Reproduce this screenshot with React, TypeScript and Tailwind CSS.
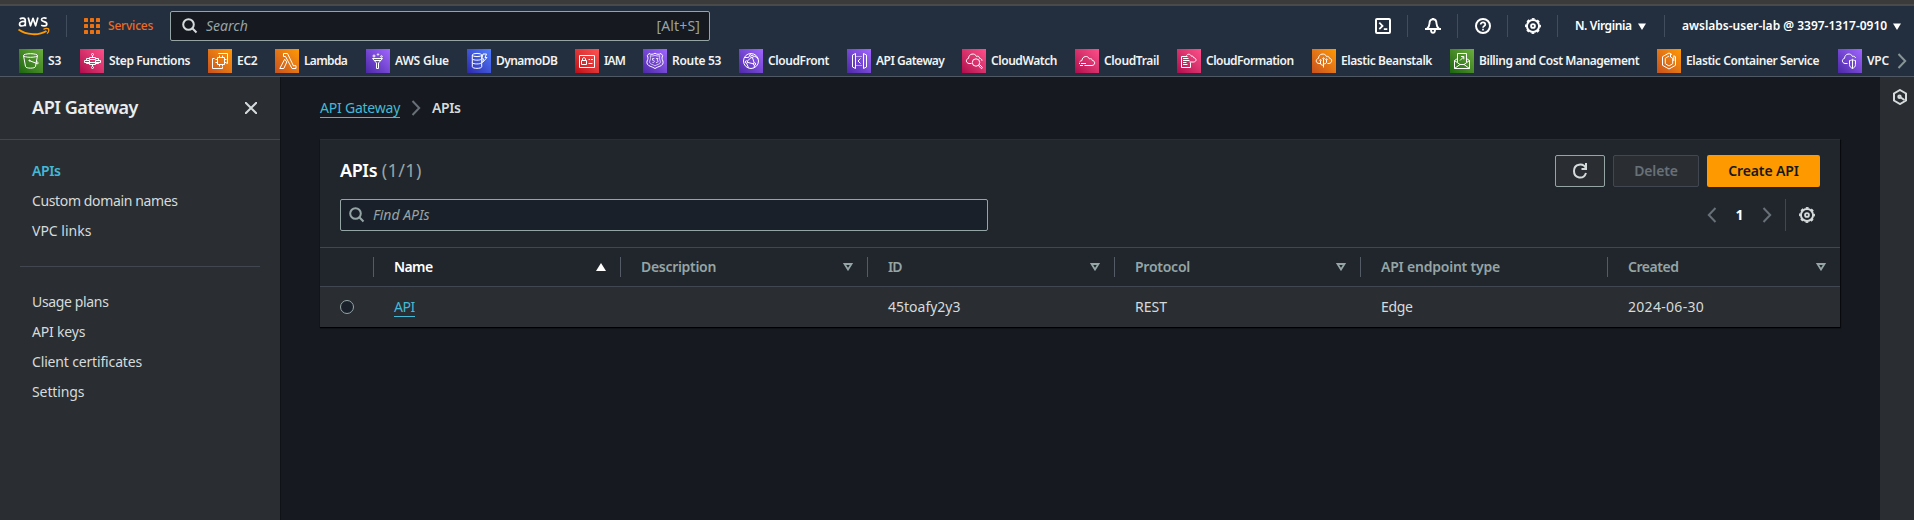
import type { ReactNode } from "react";

type Service = { label: string; slot: string; tracking: string; tile: string; icon: ReactNode };

const GREEN = "from-[#1b660f] to-[#6cae3e]";
const PINK = "from-[#b0084d] to-[#ff4f8b]";
const ORANGE = "from-[#c8511b] to-[#ff9900]";
const PURPLE = "from-[#4d27a8] to-[#a166ff]";
const BLUE = "from-[#2e27ad] to-[#527fff]";
const RED = "from-[#bd0816] to-[#ff5252]";

const services: Service[] = [
  {
    label: "S3", slot: "w-[61px]", tracking: "", tile: GREEN,
    icon: (
      <>
        <ellipse cx="11.5" cy="6.5" rx="7" ry="1.8" />
        <path d="M4.5 6.5 6.5 17.5c.6 2.2 9.4 2.2 10 0l2-11M10.5 11.7l8 3c1.4-.2 1-1.4-1-2.200" />
        <circle cx="10.5" cy="11.5" r=".6" />
      </>
    ),
  },
  {
    label: "Step Functions", slot: "w-[128px]", tracking: "tracking-[-0.37px]", tile: PINK,
    icon: (
      <>
        <circle cx="12.5" cy="5.5" r="1" />
        <circle cx="12.5" cy="18.5" r="1" />
        <path d="M9.5 8.5h6v2h-6zM4.5 11.5h5v2h-5zM15.5 11.5h5v2h-5zM9.5 15.5h6v-2h-6zM12.5 6.5v2M12.5 15.5v2M6.5 11.5v-2h3M18.5 11.5v-2h-3M6.5 13.5v1h3M18.5 13.5v1h-3" />
      </>
    ),
  },
  {
    label: "EC2", slot: "w-[67px]", tracking: "tracking-[-0.25px]", tile: ORANGE,
    icon: (
      <>
        <path d="M9.5 8.5h7v7h-7zM11.5 8.5v-2M14.5 8.5v-2M11.5 17.5v-2M14.5 17.5v-2M9.5 10.5h-2M9.5 13.5h-2M18.5 10.5h-2M18.5 13.5h-2" />
        <path d="M10.5 5V4.5h9v10h-1M6.5 9.5h-2v10h10v-1.5" />
      </>
    ),
  },
  {
    label: "Lambda", slot: "w-[91px]", tracking: "tracking-[-0.68px]", tile: ORANGE,
    icon: <path d="M9.7 10.2 4.8 19.5h4l3-6.5zM8.5 4.5h4l6 12.5 1.5-.5 1 .2v2.8h-4L10.5 7.5h-2z" />,
  },
  {
    label: "AWS Glue", slot: "w-[101px]", tracking: "tracking-[-0.2px]", tile: PURPLE,
    icon: (
      <>
        <path d="M6.5 9.5 10.5 14v5.5h2V14l4-4.5zM8 11.5h7" />
        <circle cx="8" cy="7" r="1" />
        <circle cx="12" cy="5.5" r=".7" />
        <circle cx="15.5" cy="7.5" r=".8" />
      </>
    ),
  },
  {
    label: "DynamoDB", slot: "w-[108px]", tracking: "tracking-[-0.55px]", tile: BLUE,
    icon: (
      <>
        <ellipse cx="10" cy="6" rx="4.7" ry="1.6" />
        <path d="M5.3 6v11.7c0 2.2 9.4 2.2 9.400 0V6M5.300 9.800c.6 1.800 8.400 1.800 9 .2M5.300 13.600c.6 1.800 8.400 1.800 9.200 0M16 5h3.500l-1.500 3.500h2l-4.500 5 1-3.700h-1.800z" />
      </>
    ),
  },
  {
    label: "IAM", slot: "w-[68px]", tracking: "tracking-[-0.9px]", tile: RED,
    icon: (
      <path d="M4.5 6.5h15v12h-15zM6.5 11.5h5v4h-5zM7.5 11.5v-2c0-1 3-1 3 0v2M13.5 10.5h1.5M16 10.5h2M13.5 14.5h4" />
    ),
  },
  {
    label: "Route 53", slot: "w-[96px]", tracking: "tracking-[-0.3px]", tile: PURPLE,
    icon: (
      <>
        <path d="M6 4.5c2 1.2 4 1 6-.3 2 1.3 4 1.5 6 .3l1.7 2.2c-1 2-.8 3.300.2 5.300.8 2.500-.6 4.300-3 5.200-2 .8-3.500 1.300-4.900 2.300-1.400-1-2.900-1.500-4.900-2.300-2.400-.9-3.800-2.700-3-5.200 1-2 1.200-3.300.2-5.300z" />
        <path d="M7.2 6.700c1.700.5 3.200.4 4.800-.5 1.600.9 3.100 1 4.800.5-.5 2.300-.3 3.600.5 5.600.4 1.500-.5 2.400-2 3-1.200.5-2.300.9-3.300 1.600-1-.7-2.100-1.100-3.300-1.600-1.500-.6-2.400-1.500-2-3 .8-2 1-3.300.5-5.600z" strokeWidth=".7" />
        <path d="M11.3 9.500H9.500v1.700c2.500-.2 2.500 2.500 0 2.300M13 9.500h2l-1 1.600c1.700.3 1.400 2.600-1 2.400" strokeWidth=".8" />
      </>
    ),
  },
  {
    label: "CloudFront", slot: "w-[108px]", tracking: "tracking-[-0.4px]", tile: PURPLE,
    icon: (
      <>
        <circle cx="12" cy="12" r="7.5" />
        <circle cx="13" cy="7.5" r="1.3" />
        <circle cx="7.5" cy="13" r="1.2" />
        <circle cx="15.5" cy="15" r="1.2" />
        <path d="m12.2 8.5-4 3.7M13.5 8.7l1.7 5.2M9 13.5l5.5 1.3M5.5 8.5h4l2-3.500M14.5 7c2 .3 3.500 1.500 4.500 3M15.5 16.200l-.5 2.800M7.500 14.200l2 4.500" />
      </>
    ),
  },
  {
    label: "API Gateway", slot: "w-[115px]", tracking: "tracking-[-0.5px]", tile: PURPLE,
    icon: (
      <>
        <path d="M8.5 4.5v15l-3-1.5V6zM16.5 4.5v15l3-1.5V6zM13.5 9.500 11 12l2.500 2.500" />
        <path d="M9.5 7.5h6M9.5 16.5h6" strokeDasharray="1 1" />
      </>
    ),
  },
  {
    label: "CloudWatch", slot: "w-[113px]", tracking: "tracking-[-0.44px]", tile: PINK,
    icon: (
      <>
        <path d="M9.5 14.5H7c-3.300-.4-3.500-4.500-.4-5.200C6.500 4.500 13 3.500 14.500 7.500c1.500-.8 3 0 3 1.800 1.500.2 2.500 1 2.500 2.500" />
        <circle cx="14" cy="13.5" r="3.7" />
        <path d="m16.5 16.5 1.200-.8 2.500 2.500c.5 1-.5 1.700-1.200 1.200z" />
      </>
    ),
  },
  {
    label: "CloudTrail", slot: "w-[102px]", tracking: "tracking-[-0.36px]", tile: PINK,
    icon: (
      <path d="M9.5 16.5h7.500c3.500-.2 3.500-4.800.3-5-.2-1.700-1.500-2.200-2.800-1.500-1.500-4-7.500-3-7.500 1.500-1 .2-2 .7-2.500 1.500M4 14.500h1M6 14.500h5M5 16.500h3" />
    ),
  },
  {
    label: "CloudFormation", slot: "w-[135px]", tracking: "tracking-[-0.5px]", tile: PINK,
    icon: (
      <path d="M13.5 13.5v5h-9v-11h6M6 9.500h5.500M6 11.500h6.500M6 13.500h3.500M6 15.500h4.500M9.500 6.500c1-1.700 4-1.800 4.800.7 1.300-.4 2.200.2 2.400 1.500 3 .3 3.300 4-.2 4.300h-4" />
    ),
  },
  {
    label: "Elastic Beanstalk", slot: "w-[138px]", tracking: "tracking-[-0.43px]", tile: ORANGE,
    icon: (
      <>
        <path d="M9 14.5H7c-3.500-.2-3.700-4.500-.5-5.200C6.500 4.500 13 3.500 14.500 7.500c1.500-.6 2.700.2 2.800 1.700 3.200.5 3.200 4.800-.3 5.300h-1.500M11.500 10v8.500M8.500 12v2c0 1.500.9 2.300 3 2.300M14.500 11v2c0 1.200-.9 1.900-3 1.900" />
        <circle cx="8.500" cy="11.3" r=".7" />
        <circle cx="14.5" cy="10.5" r=".7" />
        <circle cx="11.5" cy="9.5" r=".7" />
      </>
    ),
  },
  {
    label: "Billing and Cost Management", slot: "w-[207px]", tracking: "tracking-[-0.46px]", tile: GREEN,
    icon: (
      <path d="M4.5 11.5v8h15v-8l-5.500 4h-4zM4.500 19.500l5.500-4M19.500 19.500l-5.500-4M7.500 13V4.500h9V13M4.500 11.500l3-2M19.500 11.500l-3-2M10 11.500l3.500-3.500M11 7.500h2.800v2.800" />
    ),
  },
  {
    label: "Elastic Container Service", slot: "w-[181px]", tracking: "tracking-[-0.41px]", tile: ORANGE,
    icon: (
      <>
        <path d="M15 5.500 12 4 5.500 7.700v8.600L12 20l6.500-3.700V7.700l-1.700-1v5.300" />
        <path d="M12 7 8.300 9.300v5.400L12 17l3.700-2.300V9.300L13.500 8V4.500" />
      </>
    ),
  },
  {
    label: "VPC", slot: "w-[51px]", tracking: "tracking-[-0.2px]", tile: PURPLE,
    icon: (
      <path d="M9.500 14.500H7c-3.300-.4-3.500-4.500-.4-5.200C6.500 4.500 13 3.500 14.500 7.500c1.500-.6 2.700 0 3 1.500M11.500 11.500c1.200 0 2.200-.3 3-1.200.8.900 1.800 1.200 3 1.200v4c0 2-1 3-3 4-2-1-3-2-3-4zM14.500 10.500v9" />
    ),
  },
];

function Gear({ className }: { className: string }) {
  return (
    <svg viewBox="0 0 16 16" className={className} fill="none" stroke="currentColor">
      <circle cx="8" cy="8" r="6.100" strokeWidth="2" />
      <circle cx="8" cy="8" r="7.200" strokeWidth="1.500" strokeDasharray="2.827 2.827" strokeDashoffset="1.413" />
      <circle cx="8" cy="8" r="1.900" strokeWidth="1.900" />
    </svg>
  );
}

function Search({ className }: { className: string }) {
  return (
    <svg viewBox="0 0 16 16" className={className} fill="none" stroke="currentColor" strokeWidth="2">
      <circle cx="6.500" cy="6.500" r="5.300" />
      <path d="m10.300 10.300 4.200 4.200" />
    </svg>
  );
}

function Chevron({ className, flip = false }: { className: string; flip?: boolean }) {
  return (
    <svg viewBox="0 0 10 16" className={className} fill="none" stroke="currentColor" strokeWidth="2">
      <path d={flip ? "M8.500 1 1.800 8l6.700 7" : "M1.500 1l6.700 7-6.700 7"} />
    </svg>
  );
}

function Caret() {
  return (
    <svg viewBox="0 0 8 7" className="h-[7px] w-2 shrink-0" fill="currentColor">
      <path d="M0 .5h8L4 7z" />
    </svg>
  );
}

function Rule({ className = "" }: { className?: string }) {
  return <div className={`h-[22px] w-px shrink-0 bg-[#414d5c] ${className}`} />;
}

function TopBar() {
  return (
    <div className="flex h-10 items-center text-xs font-semibold text-white">
      <svg viewBox="0 0 32 22" className="ml-[18px] h-[22px] w-8 shrink-0" fill="none">
        <g stroke="#fff" strokeWidth="1.700" strokeLinejoin="round">
          <path d="M1.800 4c1.600-1.200 5.500-1.500 5.500 1.500v5.700M7.300 6.800C4.500 6 1.500 6.600 1.500 9c0 2.700 4.200 2.600 5.800.1" />
          <path d="m10.200 2.500 2.300 8.300L15 3.300l2.600 7.500 2.300-8.300" />
          <path d="M28.600 3.600c-1.800-1-5.100-.9-5.100 1.100 0 2.500 5.300 1.400 5.300 4.200 0 2.400-3.800 2.500-5.600 1.200" />
        </g>
        <path d="M.5 14.500c8 5.700 20 6.300 28 1.500" stroke="#f90" strokeWidth="1.800" />
        <path d="M25.500 14.300c1.800-.9 4-1 5-.4.500 1-.1 3.300-1.500 4.700" stroke="#f90" strokeWidth="1.300" />
      </svg>
      <Rule className="ml-4" />
      <svg viewBox="0 0 16 16" className="ml-[17px] size-4 shrink-0" fill="#ec7211">
        {[0, 6, 12].map((y) => [0, 6, 12].map((x) => <rect key={`${x}-${y}`} x={x} y={y} width="4" height="4" rx=".6" />))}
      </svg>
      <span className="ml-2 w-[62px] font-medium tracking-[-0.2px] text-[#ec6b24]">Services</span>
      <div className="flex h-[30px] w-[540px] shrink-0 items-center rounded-[2px] border border-[#95a5a6] bg-[#16191f] text-sm font-normal text-[#95a5a6]">
        <Search className="ml-[11px] size-4 text-[#d5dbdb]" />
        <span className="ml-2 flex-1 italic">Search</span>
        <span className="mr-[9px] tracking-[0.15px]">[Alt+S]</span>
      </div>
      <svg viewBox="0 0 16 16" className="ml-auto size-4 shrink-0" fill="none" stroke="#fff" strokeWidth="2">
        <rect x="1" y="1" width="14" height="14" rx="1" />
        <path d="m4.300 4.700 3.200 3.200-3.200 3.200M8.800 11.200h3.500" strokeWidth="1.800" />
      </svg>
      <Rule className="ml-4" />
      <svg viewBox="0 0 16 16" className="ml-[17px] size-4 shrink-0" fill="none" stroke="#fff" strokeWidth="2">
        <path d="M8 1.200C5.300 1.200 4.500 3.500 4.500 5.500c0 2.300-.8 3.800-2.700 5.500h12.400c-1.900-1.700-2.700-3.200-2.700-5.500 0-2-.8-4.300-3.500-4.300zM0 11h16" strokeWidth="1.900" />
        <path d="M6 11.500c0 4.500 4 4.500 4 0M8 0v2" strokeWidth="1.900" />
      </svg>
      <div className="ml-4 h-6 w-px shrink-0 bg-[#414d5c]" />
      <svg viewBox="0 0 16 16" className="ml-[17px] size-4 shrink-0" fill="none" stroke="#fff" strokeWidth="2">
        <circle cx="8" cy="8" r="7" />
        <path d="M5.700 6.600C5.700 3.600 10.300 3.800 10.300 6.500c0 1.500-2.300 1.500-2.300 3.200M8 10.700v1.700" strokeWidth="1.700" />
      </svg>
      <Rule className="ml-4" />
      <Gear className="ml-[17px] size-4 shrink-0" />
      <Rule className="ml-4" />
      <span className="ml-[17px] w-[63px] shrink-0 tracking-[-0.4px] whitespace-nowrap">N. Virginia</span>
      <Caret />
      <Rule className="ml-[18px]" />
      <span className="ml-[17px] w-[211px] shrink-0 whitespace-nowrap">awslabs-user-lab @ 3397-1317-0910</span>
      <Caret />
      <div className="w-[13px] shrink-0" />
    </div>
  );
}

function Favorites() {
  return (
    <div className="flex h-[30px] items-center pl-[19px] text-xs font-semibold text-[#f2f3f3]">
      {services.map((s) => (
        <div key={s.label} className={`flex shrink-0 items-center gap-[5px] whitespace-nowrap ${s.slot}`}>
          <div className={`size-6 shrink-0 bg-linear-to-tr ${s.tile}`}>
            <svg viewBox="0 0 24 24" className="size-6" fill="none" stroke="#fff" strokeWidth="1">
              {s.icon}
            </svg>
          </div>
          <span className={s.tracking}>{s.label}</span>
        </div>
      ))}
      <Chevron className="ml-2 h-4 w-[10px] shrink-0 text-[#879596]" />
    </div>
  );
}

function Sidebar() {
  return (
    <nav className="flex w-[280px] shrink-0 flex-col bg-[#2a2e33] text-sm text-[#d5dbdb]">
      <div className="flex h-[63px] items-center justify-between border-b border-[#414750] pr-[23px] pl-8">
        <span className="pb-0.5 text-lg font-semibold tracking-[-0.45px] text-[#eaeded]">API Gateway</span>
        <svg viewBox="0 0 12 12" className="size-3" fill="none" stroke="currentColor" strokeWidth="2">
          <path d="m0 0 12 12M12 0 0 12" />
        </svg>
      </div>
      <div className="mt-4 flex flex-col items-start px-8 leading-[30px]">
        <span className="font-semibold tracking-[-0.4px] text-[#44b9d6]">APIs</span>
        <span className="tracking-[-0.37px]">Custom domain names</span>
        <span>VPC links</span>
      </div>
      <div className="mx-5 mt-5 h-px bg-[#414750]" />
      <div className="mt-5 flex flex-col items-start px-8 leading-[30px]">
        <span className="tracking-[-0.35px]">Usage plans</span>
        <span className="tracking-[-0.2px]">API keys</span>
        <span className="tracking-[-0.16px]">Client certificates</span>
        <span className="tracking-[-0.1px]">Settings</span>
      </div>
    </nav>
  );
}

function SortIcon({ active = false }: { active?: boolean }) {
  return active ? (
    <svg viewBox="0 0 10 8" className="h-2 w-[10px]" fill="#fff">
      <path d="M5 0l5 8H0z" />
    </svg>
  ) : (
    <svg viewBox="0 0 10 8" className="h-2 w-[10px]" fill="none" stroke="currentColor" strokeWidth="1.800">
      <path d="M1.500 1h7L5 6.500z" />
    </svg>
  );
}

const GRID = "grid grid-cols-[53px_247px_247px_247px_246px_247px_233px]";

function HeadCell({ label, sort, className }: { label: string; sort?: "up" | "none"; className: string }) {
  return (
    <div className="flex h-5 items-center justify-between border-l border-[#545b64] pr-[14px] pl-5">
      <span className={className}>{label}</span>
      {sort && <SortIcon active={sort === "up"} />}
    </div>
  );
}

function Main() {
  return (
    <main className="flex min-w-0 flex-1 flex-col border-l border-[#0f1217] pr-10 pl-[39px] text-sm text-[#d5dbdb]">
      <div className="flex h-[62px] items-center">
        <span className="border-b border-[#44b9d6] leading-[18px] tracking-[-0.22px] text-[#44b9d6]">API Gateway</span>
        <Chevron className="ml-[11px] h-4 w-[10px] text-[#687078]" />
        <span className="ml-[11px] font-semibold tracking-[-0.4px]">APIs</span>
      </div>
      <section className="h-[188px] border-t border-[#2a2e33] bg-[#21252c] shadow-[0_1px_1px_0_#000,1px_1px_1px_0_#0a0c10]">
        <div className="mt-[15px] flex h-8 items-center gap-2 px-5">
          <h1 className="mr-auto pb-0.5 text-lg font-semibold text-white">
            <span className="tracking-[-0.4px]">APIs</span>{" "}
            <span className="font-normal tracking-[0.35px] text-[#95a5a6]">(1/1)</span>
          </h1>
          <button className="flex h-8 w-[50px] items-center justify-center rounded-[2px] border border-[#95a5a6] bg-[#2a2e33]">
            <svg viewBox="0 0 16 16" className="size-4" fill="none" stroke="currentColor" strokeWidth="2">
              <path d="M14 10c-2.500 7-12 5.500-12-2 0-7.500 9.500-8.500 12-2.500M14 0v6H9.500" />
            </svg>
          </button>
          <button className="h-8 w-[86px] rounded-[2px] border border-[#414750] bg-[#2a2e33] font-semibold tracking-[-0.15px] text-[#687078]">
            Delete
          </button>
          <button className="h-8 w-[113px] rounded-[2px] bg-[#ff9900] font-semibold tracking-[-0.13px] text-[#16191f]">
            Create API
          </button>
        </div>
        <div className="mt-3 flex h-8 items-center px-5">
          <div className="flex h-8 w-[648px] items-center rounded-[2px] border border-[#95a5a6] bg-[#1a2029] text-[#95a5a6]">
            <Search className="ml-2 size-4" />
            <span className="ml-2 italic">Find APIs</span>
          </div>
          <Chevron flip className="ml-auto h-4 w-[10px] text-[#687078]" />
          <span className="w-[45px] text-center font-bold text-white">1</span>
          <Chevron className="h-4 w-[10px] text-[#687078]" />
          <div className="ml-[13px] h-8 w-px bg-[#414750]" />
          <Gear className="mr-[5px] ml-[13px] size-4" />
        </div>
        <div className={`${GRID} mt-4 h-10 items-center border-y border-[#414750] font-semibold text-[#95a5a6]`}>
          <span />
          <HeadCell label="Name" sort="up" className="tracking-[-0.6px] text-white" />
          <HeadCell label="Description" sort="none" className="tracking-[-0.3px]" />
          <HeadCell label="ID" sort="none" className="tracking-[-1px]" />
          <HeadCell label="Protocol" sort="none" className="tracking-[-0.25px]" />
          <HeadCell label="API endpoint type" className="tracking-[-0.22px]" />
          <HeadCell label="Created" sort="none" className="tracking-[-0.45px]" />
        </div>
        <div className={`${GRID} h-10 items-center justify-items-start bg-[#2a2e33]`}>
          <span className="ml-5 size-[14px] rounded-full border border-[#95a5a6] bg-[#1a2029]" />
          <span className="ml-[21px] border-b border-[#44b9d6] leading-[18px] tracking-[-0.4px] text-[#44b9d6]">API</span>
          <span />
          <span className="ml-[21px]">45toafy2y3</span>
          <span className="ml-[21px]">REST</span>
          <span className="ml-[21px] tracking-[-0.3px]">Edge</span>
          <span className="ml-[21px] tracking-[0.3px]">2024-06-30</span>
        </div>
      </section>
    </main>
  );
}

export default function App() {
  return (
    <div className="flex h-[520px] w-[1914px] flex-col overflow-hidden bg-[#16191f] font-['Noto_Sans',sans-serif]">
      <div className="h-[6px] shrink-0 border-b-2 border-[#4a4a4a] bg-[#3b3b3b]" />
      <header className="h-[71px] shrink-0 border-b border-[#4f5863] bg-[#232f3e]">
        <TopBar />
        <Favorites />
      </header>
      <div className="flex flex-1">
        <Sidebar />
        <Main />
        <aside className="flex w-[34px] shrink-0 justify-center bg-[#2a2e33] pt-3 pl-[6px]">
          <svg viewBox="0 0 16 16" className="size-4" fill="none" stroke="#d5dbdb" strokeWidth="2">
            <path d="M8 1l6 3.500v7L8 15l-6-3.500v-7z" />
            <path d="m8 8 4.500 3" />
            <circle cx="7.500" cy="7.700" r="1.200" />
          </svg>
        </aside>
      </div>
    </div>
  );
}
